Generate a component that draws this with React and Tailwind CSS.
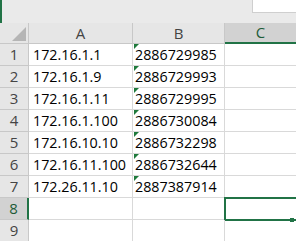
const rows = [
  ["172.16.1.1", "2886729985"],
  ["172.16.1.9", "2886729993"],
  ["172.16.1.11", "2886729995"],
  ["172.16.1.100", "2886730084"],
  ["172.16.10.10", "2886732298"],
  ["172.16.11.100", "2886732644"],
  ["172.26.11.10", "2887387914"],
  ["", ""],
  ["", ""],
];

const font = { fontFamily: '"Open Sans", "Segoe UI", sans-serif' };

function Flag() {
  return (
    <svg className="absolute left-[1px] top-0" width="5" height="5" viewBox="0 0 5 5">
      <polygon points="0,0 5,0 0,5" fill="#1f7a3c" />
    </svg>
  );
}

export default function App() {
  return (
    <div className="w-[296px] h-[241px] overflow-hidden bg-white text-[14.3px] text-black" style={font}>
      <div className="relative h-[23px] bg-[#eaeaea] border-l-2 border-[#217346]">
        <div className="absolute right-0 top-0 w-[44px] h-[13px] bg-white border-l border-b border-[#cfcfcf]" />
      </div>
      <div className="grid grid-cols-[29px_104px_92px_1fr] grid-rows-[21px] h-[21px] bg-[#e6e6e6] text-[#444] text-[15px]">
        <div className="relative border-r border-b border-[#c8c8c8]">
          <svg className="absolute right-[2px] bottom-[2px]" width="14" height="14" viewBox="0 0 14 14">
            <polygon points="14,0 14,14 0,14" fill="#b5b5b5" />
          </svg>
        </div>
        <div className="flex items-center justify-center border-r border-b border-[#c8c8c8]">A</div>
        <div className="flex items-center justify-center border-r border-b border-[#c8c8c8]">B</div>
        <div className="flex items-center justify-center bg-[#d2d2d2] border-b-2 border-[#217346] text-[#1e5c38]">C</div>
      </div>
      <div className="grid grid-cols-[29px_104px_92px_1fr] auto-rows-[22px]">
        {rows.map((r, i) => {
          const sel = i === 7;
          return [
            <div
              key={"h" + i}
              className={
                "flex items-center justify-center text-[15px] border-b border-[#c8c8c8] " +
                (sel ? "bg-[#d2d2d2] text-[#1e5c38] border-r-2 border-r-[#217346]" : "bg-[#e6e6e6] text-[#444] border-r border-r-[#c8c8c8]")
              }
            >
              {i + 1}
            </div>,
            <div key={"a" + i} className="flex items-center pl-[4px] border-r border-b border-[#d9d9d9] whitespace-nowrap">
              {r[0]}
            </div>,
            <div key={"b" + i} className="relative flex items-center pl-[2px] border-r border-b border-[#d9d9d9] whitespace-nowrap">
              {r[1] && <Flag />}
              {r[1]}
            </div>,
            <div
              key={"c" + i}
              className={sel ? "relative border-2 border-r-0 border-[#217346] -mt-[1px] h-[24px] -ml-[1px] -mr-[10px]" : "border-b border-[#d9d9d9]"}
            >
              {sel && <div className="absolute left-[64px] bottom-[-3px] w-[4px] h-[4px] bg-[#217346]" />}
            </div>,
          ];
        })}
      </div>
    </div>
  );
}
